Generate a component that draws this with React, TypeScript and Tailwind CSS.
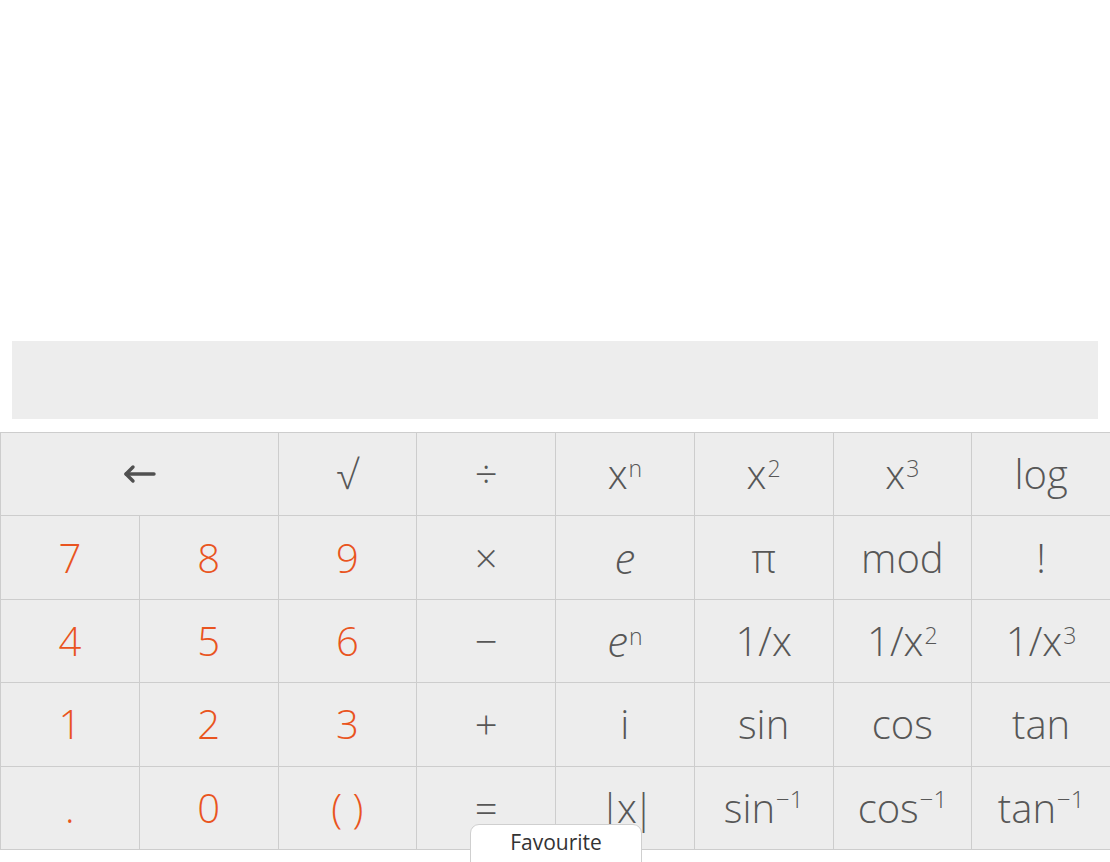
import React from "react";

type Key = { label: React.ReactNode; kind?: "num" | "op"; span?: boolean };

// superscript that sits at the top of the x-height / cap line
const Sup = ({ children, hi }: { children: React.ReactNode; hi?: boolean }) => (
  <span className={`relative ml-[1px] ${hi ? "-top-[15px] text-[24px]" : "-top-[12px] text-[23px]"}`}>{children}</span>
);

const E = () => <span className="italic font-light text-[42px]">e</span>;

const BackArrow = () => (
  <svg width="34" height="20" viewBox="0 0 34 20" fill="none" stroke="#505050" strokeWidth="3.4" strokeLinecap="round" strokeLinejoin="round">
    <path d="M4 10h28" />
    <path d="M11 3 4 10l7 7" />
  </svg>
);

const keys: Key[] = [
  { label: <BackArrow />, span: true },
  { label: "√" },
  { label: "÷" },
  { label: <>x<Sup>n</Sup></> },
  { label: <>x<Sup>2</Sup></> },
  { label: <>x<Sup>3</Sup></> },
  { label: "log" },

  { label: "7", kind: "num" },
  { label: "8", kind: "num" },
  { label: "9", kind: "num" },
  { label: "×" },
  { label: <E /> },
  { label: "π" },
  { label: "mod" },
  { label: "!" },

  { label: "4", kind: "num" },
  { label: "5", kind: "num" },
  { label: "6", kind: "num" },
  { label: "−" },
  { label: <><E /><Sup>n</Sup></> },
  { label: "1/x" },
  { label: <>1/x<Sup>2</Sup></> },
  { label: <>1/x<Sup>3</Sup></> },

  { label: "1", kind: "num" },
  { label: "2", kind: "num" },
  { label: "3", kind: "num" },
  { label: "+" },
  { label: "i" },
  { label: "sin" },
  { label: "cos" },
  { label: "tan" },

  { label: ".", kind: "num" },
  { label: "0", kind: "num" },
  { label: "( )", kind: "num" },
  { label: "=" },
  { label: <span className="tracking-[-4px]">|x|</span> },
  { label: <>sin<Sup hi>−1</Sup></> },
  { label: <>cos<Sup hi>−1</Sup></> },
  { label: <>tan<Sup hi>−1</Sup></> },
];

export default function App() {
  return (
    <div
      className="relative h-[862px] w-[1110px] overflow-hidden bg-white"
      style={{ fontFamily: '"Open Sans", "Noto Sans", sans-serif' }}
    >
      {/* output area */}
      <div className="h-[341px]" />

      {/* input line */}
      <div className="mx-[12px] h-[78px] bg-[#ededed]" />

      {/* keypad */}
      <div className="mt-[13px] grid grid-cols-8 auto-rows-[82.4px] gap-px bg-[#cdcdcd] py-px pl-px">
        {keys.map((k, i) => (
          <button
            key={i}
            className={`flex items-center justify-center bg-[#ededed] text-[40px] font-light leading-none ${
              k.span ? "col-span-2" : ""
            } ${k.kind === "num" ? "text-[#e95420]" : "text-[#575757]"}`}
          >
            <span className="whitespace-nowrap">{k.label}</span>
          </button>
        ))}
      </div>

      {/* bottom tab */}
      <div className="absolute bottom-[-10px] left-[470px] flex h-[48px] w-[172px] justify-center rounded-t-[9px] border border-[#cfcfcf] bg-white pt-[7px] text-[21px] leading-none text-[#333]">
        Favourite
      </div>
    </div>
  );
}
